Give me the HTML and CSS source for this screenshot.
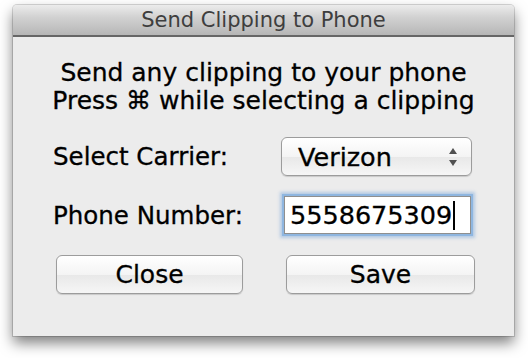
FILE: index.html
```html
<!DOCTYPE html>
<html>
<head>
  <link rel="stylesheet" href="styles.css">
</head>
<body>
  <div class="window">
    <div class="titlebar">Send Clipping to Phone</div>

    <div class="content">
      <div class="message">
        Send any clipping to your phone<br>
        Press &#8984; while selecting a clipping
      </div>

      <div class="form">
        <div class="label">Select Carrier:</div>
        <div class="popup">
          <span>Verizon</span>
          <span class="arrows">
            <svg width="8" height="18" viewBox="0 0 8 18">
              <path d="M4 0 L8 6 L0 6 Z" fill="#505050"/>
              <path d="M4 18 L8 12 L0 12 Z" fill="#505050"/>
            </svg>
          </span>
        </div>

        <div class="label">Phone Number:</div>
        <div class="field">5558675309<span class="caret"></span></div>
      </div>

      <div class="buttons">
        <div class="button">Close</div>
        <div class="button">Save</div>
      </div>
    </div>
  </div>
</body>
</html>
```

FILE: styles.css
```css
body {
  margin: 0;
  min-height: 100vh;
  padding-top: 5px;
  box-sizing: border-box;
  background-color: #ffffff;
  font-family: 'DejaVu Sans', 'Liberation Sans', sans-serif;
  color: #000000;
}

.window {
  margin-left: 13px;
  width: 501px;
  height: 331px;
  background-color: #ececec;
  border-radius: 4px 4px 0 0;
  box-shadow: 0 7px 14px rgba(0,0,0,0.5), 0 0 0 1px rgba(0,0,0,0.15);
  display: flex;
  flex-direction: column;
}

.titlebar {
  height: 30px;
  line-height: 30px;
  text-align: center;
  font-size: 21px;
  color: #3e3e3e;
  background: linear-gradient(#ececec, #d2d2d2 40%, #b6b6b6);
  border-bottom: 2px solid #666666;
  border-radius: 4px 4px 0 0;
}

.content {
  padding: 22px 0 0 0;
  -webkit-text-stroke: 0.3px #000000;
}

.message {
  text-align: center;
  font-size: 25px;
  line-height: 28px;
}

.form {
  display: grid;
  grid-template-columns: 228px 191px;
  row-gap: 20px;
  align-items: center;
  margin: 22px 0 0 40px;
}

.label {
  font-size: 24.5px;
}

.popup {
  height: 37px;
  border: 1px solid #9c9c9c;
  border-radius: 6px;
  background: linear-gradient(#ffffff, #f4f4f4 50%, #e8e8e8 51%, #f6f6f6);
  box-shadow: 0 1px 1px rgba(0,0,0,0.15);
  display: flex;
  align-items: center;
  justify-content: space-between;
  padding: 0 14px 0 16px;
  font-size: 25.5px;
}

.arrows {
  display: flex;
}

.field {
  height: 36px;
  margin: 0 1px 0 3px;
  border: 1px solid #8f8f8f;
  background-color: #ffffff;
  box-shadow: 0 0 0 2px #8fb6e0, 0 0 3px 4px rgba(110,160,220,0.45);
  display: flex;
  align-items: center;
  padding-left: 5px;
  font-size: 25.5px;
}

.caret {
  display: inline-block;
  width: 2px;
  height: 29px;
  margin-left: 1px;
  background-color: #000000;
}

.buttons {
  display: grid;
  grid-template-columns: 187px 189px;
  column-gap: 43px;
  margin: 21px 0 0 43px;
}

.button {
  height: 37px;
  line-height: 37px;
  text-align: center;
  font-size: 25px;
  border: 1px solid #9c9c9c;
  border-radius: 6px;
  background: linear-gradient(#ffffff, #f4f4f4 50%, #e8e8e8 51%, #f6f6f6);
  box-shadow: 0 1px 1px rgba(0,0,0,0.15);
}
```
